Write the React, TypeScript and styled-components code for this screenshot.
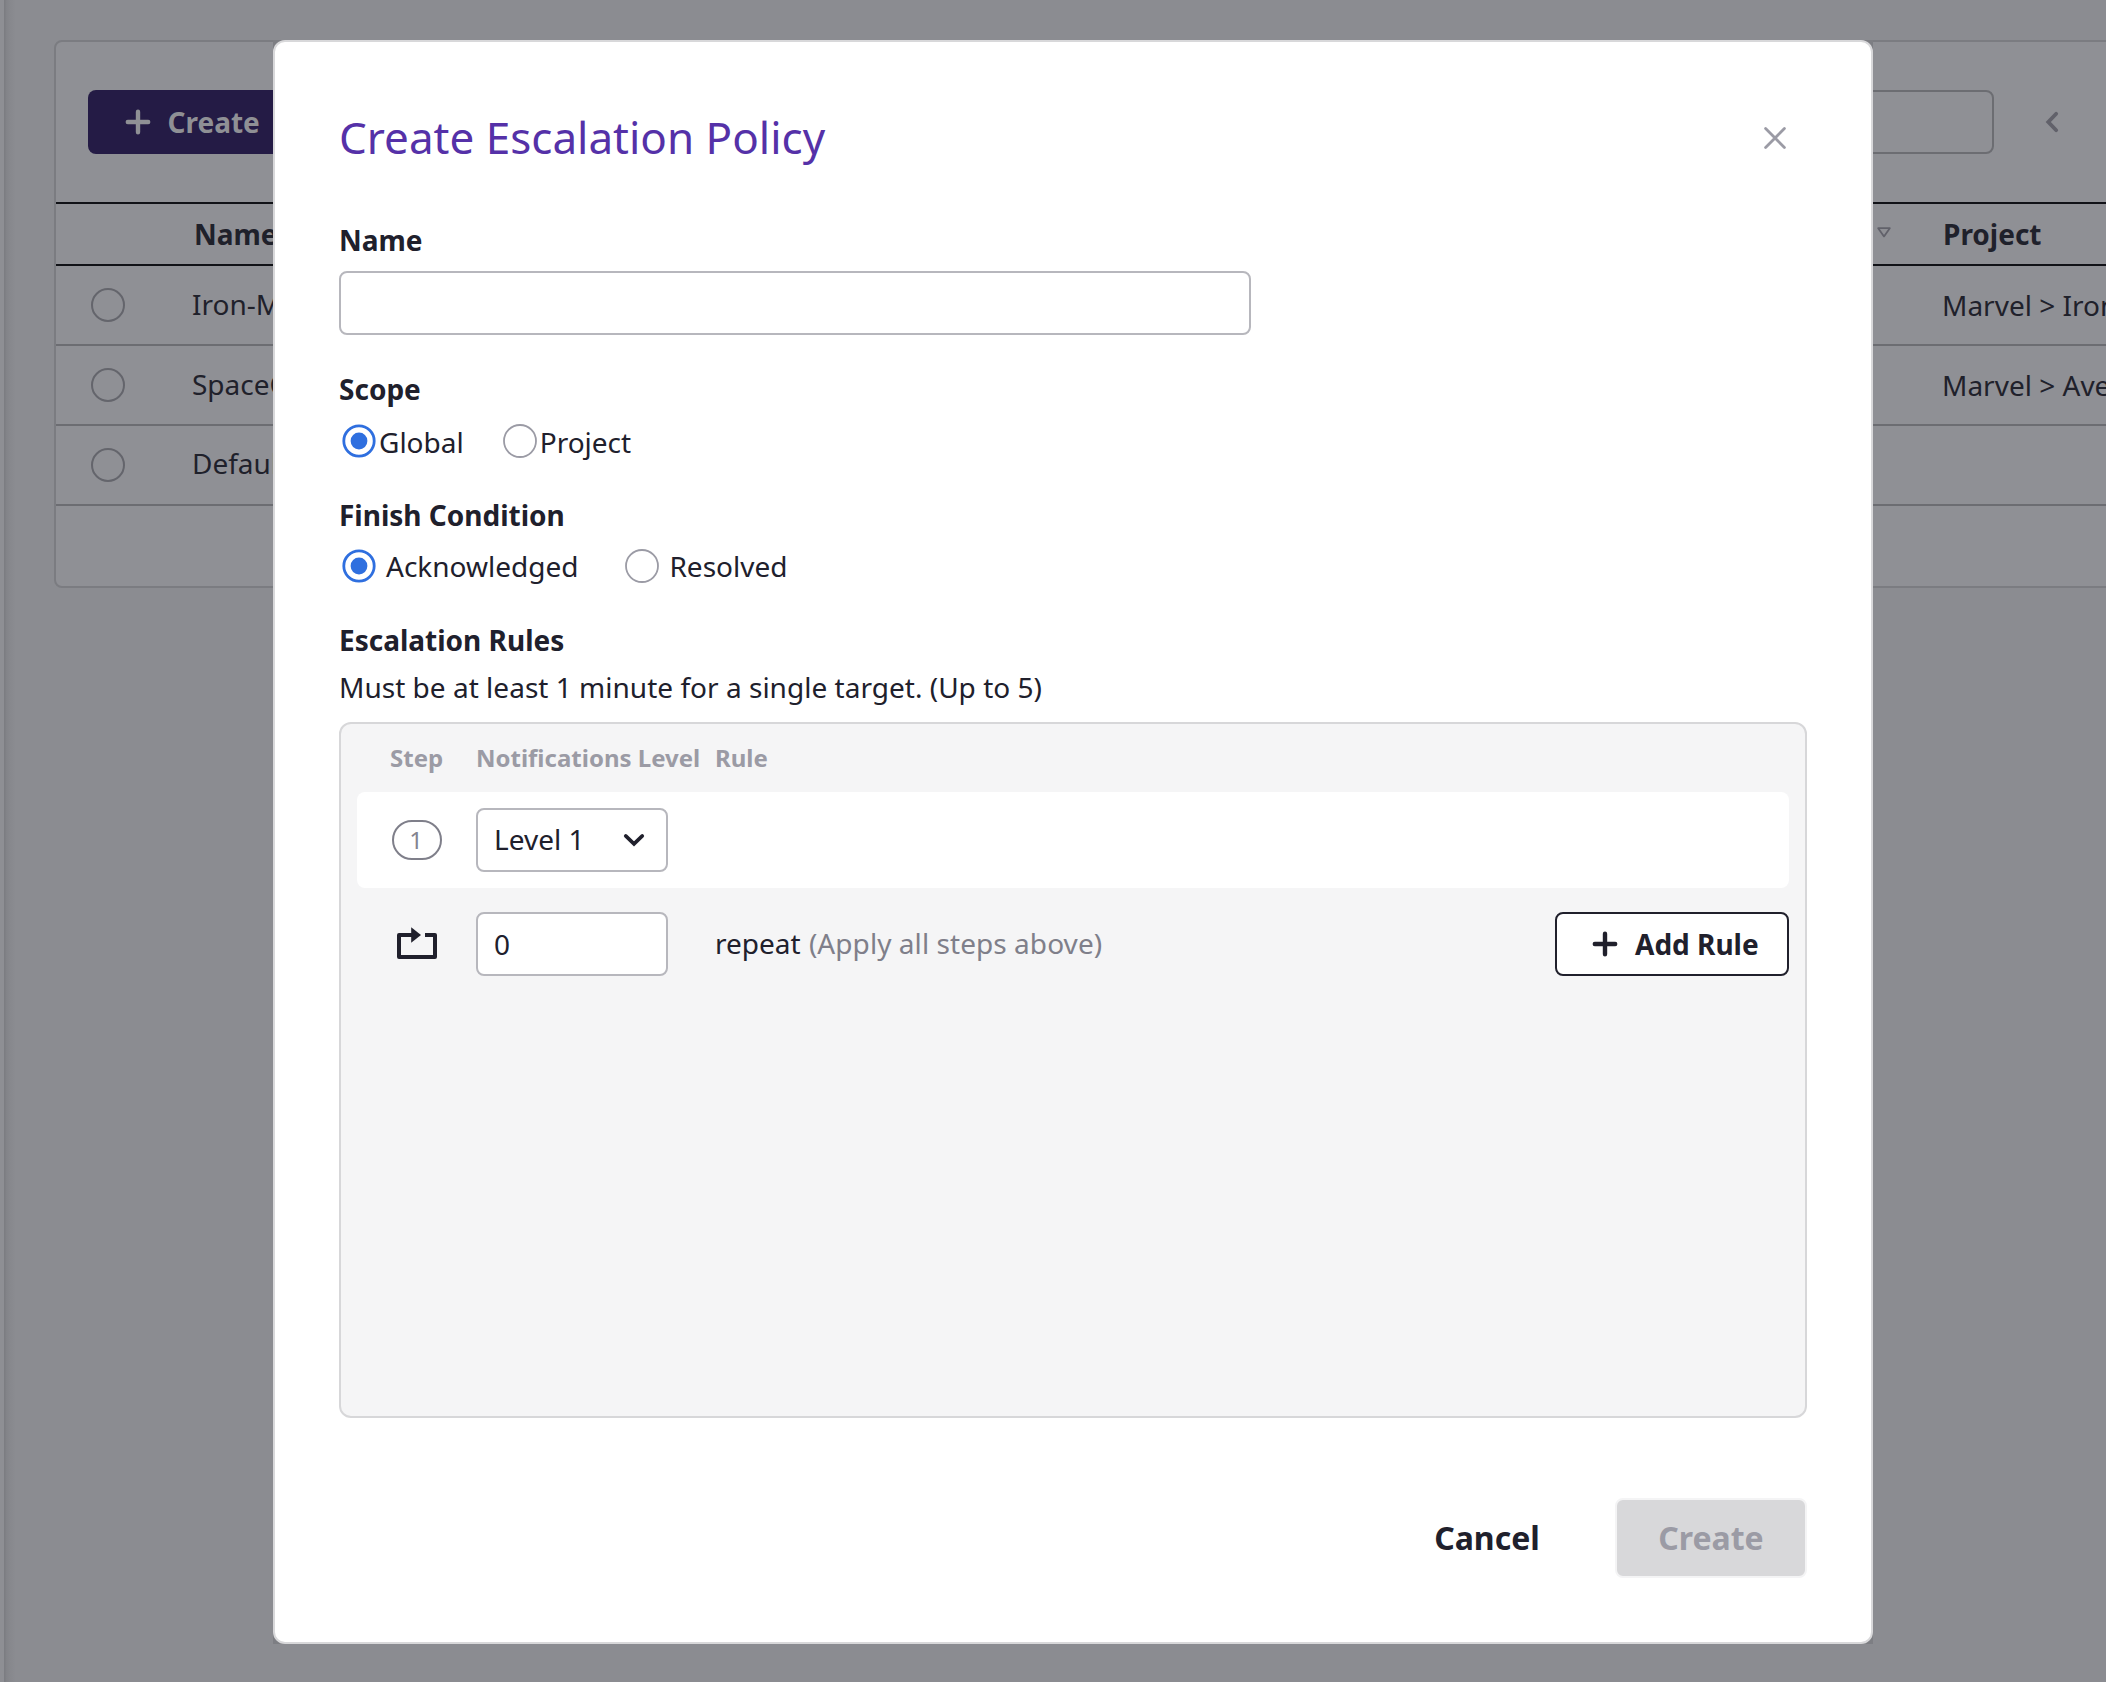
import React from 'react';
import styled, { createGlobalStyle } from 'styled-components';

const GlobalStyle = createGlobalStyle`
  *, *::before, *::after { box-sizing: border-box; }
  body {
    margin: 0;
    overflow: hidden;
    background: #8b8c91;
    font-family: 'Noto Sans', sans-serif;
    font-size: 28px;
    line-height: 40px;
    color: #20202c;
  }
  button, input { font: inherit; color: inherit; margin: 0; }
`;

/* ---------- dimmed page ---------- */

const Page = styled.div`
  position: relative;
  display: flex;
  width: 2106px;
  height: 1682px;
  overflow: hidden;
`;

const SideEdge = styled.div`
  flex: none;
  width: 16px;
  background: linear-gradient(
    to right,
    #8e8f94 0 4px,
    #7c7d82 4px 5px,
    #828388 6px,
    #87888d 10px,
    #8b8c91 16px
  );
`;

const Main = styled.main`
  flex: none;
  width: 2300px;
  padding: 40px 0 0 38px;
`;

const Card = styled.section`
  height: 548px;
  background: #8f9095;
  border: 2px solid #7b7c81;
  border-radius: 8px;
`;

const Toolbar = styled.div`
  display: flex;
  align-items: center;
  height: 160px;
  padding-left: 32px;
`;

const ToolbarCreate = styled.button`
  display: flex;
  align-items: center;
  width: 240px;
  height: 64px;
  padding: 0 0 0 36px;
  gap: 15.5px;
  border: 0;
  border-radius: 8px;
  background: #241b45;
  color: #8f9095;
  font-weight: 700;
`;

const Search = styled.div`
  width: 560px;
  height: 64px;
  margin-left: 1106px;
  border: 2px solid #6c6d72;
  border-radius: 8px;
`;

const Pager = styled.div`
  display: flex;
  margin-left: 50px;
  color: #61616a;
`;

const TableHead = styled.div`
  display: grid;
  grid-template-columns: 138px 1681px 68px 1fr;
  align-items: center;
  height: 64px;
  border-top: 2px solid #111217;
  border-bottom: 2px solid #111217;
  color: #1f212b;
  font-weight: 700;
`;

const Sort = styled.span`
  display: flex;
  color: #61616a;
  padding: 0 0 4px 2px;
`;

const TableRow = styled.div`
  display: grid;
  grid-template-columns: 35px 101px 1750px 1fr;
  align-items: center;
  height: 80px;
  border-bottom: 2px solid #6c6d72;
  color: #1f212b;
`;

const Cell = styled.span<{ $shift?: number }>`
  padding-bottom: ${(p) => p.$shift ?? 0}px;
  white-space: nowrap;
`;

const RowRadio = styled.i`
  width: 34px;
  height: 34px;
  border: 2px solid #64656c;
  border-radius: 50%;
`;

/* ---------- dialog ---------- */

const Overlay = styled.div`
  position: absolute;
  inset: 0;
  padding: 40px 0 0 273px;
`;

const DialogFrame = styled.div`
  width: 1600px;
  background: #7d7e83;
`;

const Dialog = styled.div`
  display: flex;
  flex-direction: column;
  height: 1604px;
  padding: 65px 64px 0;
  background: #fff;
  border: 2px solid #d8d8da;
  border-radius: 12px;
`;

const DialogHeader = styled.header`
  display: flex;
  align-items: center;
  justify-content: space-between;
  height: 60px;
  margin-bottom: 53px;
`;

const Title = styled.h1`
  margin: 0;
  font-size: 44px;
  line-height: 60px;
  font-weight: 400;
  color: #5531a8;
`;

const CloseButton = styled.button`
  display: flex;
  padding: 2px 0 0;
  margin-right: 20px;
  border: 0;
  background: none;
  color: #9b9ba5;
`;

const Label = styled.h2<{ $gap: number }>`
  margin: 0 0 ${(p) => p.$gap}px;
  font-size: 28px;
  line-height: 40px;
  font-weight: 700;
`;

const TextInput = styled.input<{ $width: number }>`
  width: ${(p) => p.$width}px;
  height: 64px;
  padding: 0 16px;
  background: #fff;
  border: 2px solid #b7b7bd;
  border-radius: 8px;
  outline: 0;
`;

const Block = styled.div<{ $gap: number }>`
  display: flex;
  flex-direction: column;
  align-items: flex-start;
  margin-bottom: ${(p) => p.$gap}px;
`;

const RadioGroup = styled.div<{ $gap: number }>`
  display: flex;
  gap: ${(p) => p.$gap}px;
  padding-left: 3px;
`;

const RadioOption = styled.label<{ $gap: number; $lift: number }>`
  display: flex;
  align-items: center;
  gap: ${(p) => p.$gap}px;
  height: 40px;
  svg { margin-bottom: ${(p) => p.$lift}px; }
`;

const Hint = styled.p`
  margin: 0 0 15px;
  letter-spacing: 0.02px;
`;

const RulesBox = styled.div`
  height: 696px;
  padding: 0 16px;
  background: #f5f5f6;
  border: 2px solid #d7d7d9;
  border-radius: 12px;
`;

const RulesHead = styled.div`
  display: grid;
  grid-template-columns: 86px 239px 1fr;
  height: 68px;
  padding: 14px 0 0 33px;
  font-size: 24px;
  line-height: 40px;
  font-weight: 700;
  color: #9b9ba5;
`;

const RuleRow = styled.div<{ $filled?: boolean }>`
  display: grid;
  grid-template-columns: 119px 239px 1fr auto;
  align-items: center;
  height: ${(p) => (p.$filled ? 96 : 64)}px;
  margin-bottom: 24px;
  border-radius: 8px;
  background: ${(p) => (p.$filled ? '#fff' : 'transparent')};
`;

const StepBadge = styled.span`
  width: 50px;
  height: 40px;
  margin-left: 35px;
  padding-right: 2px;
  border: 2px solid #7f7f8a;
  border-radius: 20px;
  font-size: 24px;
  line-height: 36px;
  text-align: center;
  color: #84848f;
`;

const RepeatMark = styled.span`
  display: flex;
  margin-left: 39px;
`;

const LevelSelect = styled.div`
  display: flex;
  align-items: center;
  justify-content: space-between;
  width: 192px;
  height: 64px;
  padding: 0 20px 0 16px;
  background: #fff;
  border: 2px solid #b7b7bd;
  border-radius: 8px;
`;

const SelectValue = styled.span`
  padding-bottom: 2px;
`;

const RepeatText = styled.span`
  padding-bottom: 2px;
`;

const Muted = styled.span`
  margin-left: 1px;
  letter-spacing: 0.06px;
  color: #7f7f8a;
`;

const AddRuleButton = styled.button`
  display: flex;
  align-items: center;
  width: 234px;
  height: 64px;
  padding: 0 0 0 34px;
  gap: 16px;
  background: #fff;
  border: 2px solid #20202c;
  border-radius: 8px;
  font-weight: 700;
`;

const DialogFooter = styled.footer`
  display: flex;
  justify-content: flex-end;
  height: 80px;
  margin-top: 80px;
`;

const FooterButton = styled.button<{ $disabled?: boolean }>`
  width: 192px;
  height: 80px;
  padding: 0;
  margin-left: ${(p) => (p.$disabled ? 32 : 0)}px;
  border: 2px solid ${(p) => (p.$disabled ? '#f4f4f5' : 'transparent')};
  border-radius: 8px;
  background: ${(p) => (p.$disabled ? '#d8d8da' : 'transparent')};
  color: ${(p) => (p.$disabled ? '#9b9ba5' : '#20202c')};
  font-size: 32px;
  line-height: 44px;
  font-weight: 700;
`;

/* ---------- icons ---------- */

const Plus = () => (
  <svg width="28" height="28" viewBox="0 0 28 28" fill="none" stroke="currentColor" strokeWidth="4.4" strokeLinecap="round">
    <path d="M14 3.8V24.2M3.8 14H24.2" />
  </svg>
);

const Close = () => (
  <svg width="24" height="24" viewBox="0 0 24 24" fill="none" stroke="currentColor" strokeWidth="2.8" strokeLinecap="round">
    <path d="M2.6 2.6L21.4 21.4M21.4 2.6L2.6 21.4" />
  </svg>
);

const ChevronDown = () => (
  <svg width="24" height="16" viewBox="0 0 24 16" fill="none" stroke="currentColor" strokeWidth="3.6" strokeLinecap="round">
    <path d="M3.7 3.9L12 11.9L20.3 3.9" />
  </svg>
);

const ChevronLeft = () => (
  <svg width="16" height="24" viewBox="0 0 16 24" fill="none" stroke="currentColor" strokeWidth="3.8" strokeLinecap="round">
    <path d="M12.2 3.8L4.3 12L12.2 20.2" />
  </svg>
);

const SortDown = () => (
  <svg width="14" height="11" viewBox="0 0 14 11" fill="none" stroke="currentColor" strokeWidth="1.8" strokeLinejoin="round">
    <path d="M1.2 1.2H12.8L7 9.4Z" />
  </svg>
);

const Repeat = () => (
  <svg width="42" height="34" viewBox="0 0 42 34">
    <path d="M17 8H3V30H39V8H29" fill="none" stroke="#20202c" strokeWidth="4" strokeLinejoin="round" />
    <path d="M15.2 0.3L25 8L15.2 15.7Z" fill="#20202c" />
  </svg>
);

const RadioMark = ({ checked }: { checked?: boolean }) => (
  <svg width="34" height="34" viewBox="0 0 34 34" fill="none">
    <circle cx="17" cy="17" r={checked ? 15.2 : 16} stroke={checked ? '#2f6fdf' : '#9b9ba5'} strokeWidth={checked ? 2.8 : 1.8} />
    {checked && <circle cx="17" cy="17" r="8.4" fill="#2f6fdf" />}
  </svg>
);

/* ---------- data ---------- */

const policies = [
  { name: 'Iron-Man', project: 'Marvel > Iron', nameShift: 2 },
  { name: 'SpaceONE', project: 'Marvel > Ave', nameShift: 2 },
  { name: 'Default', project: '', nameShift: 4 },
];

export default function App() {
  return (
    <>
      <GlobalStyle />
      <Page>
        <SideEdge />
        <Main>
          <Card>
            <Toolbar>
              <ToolbarCreate>
                <Plus />
                Create
              </ToolbarCreate>
              <Search />
              <Pager>
                <ChevronLeft />
              </Pager>
            </Toolbar>
            <TableHead>
              <Cell />
              <Cell>Name</Cell>
              <Sort>
                <SortDown />
              </Sort>
              <Cell>Project</Cell>
            </TableHead>
            {policies.map((p) => (
              <TableRow key={p.name}>
                <Cell />
                <RowRadio />
                <Cell $shift={p.nameShift}>{p.name}</Cell>
                <Cell>{p.project}</Cell>
              </TableRow>
            ))}
          </Card>
        </Main>

        <Overlay>
          <DialogFrame>
            <Dialog role="dialog">
              <DialogHeader>
                <Title>Create Escalation Policy</Title>
                <CloseButton aria-label="Close">
                  <Close />
                </CloseButton>
              </DialogHeader>

              <Block $gap={34}>
                <Label $gap={11}>Name</Label>
                <TextInput $width={912} />
              </Block>

              <Block $gap={33}>
                <Label $gap={13}>Scope</Label>
                <RadioGroup $gap={39}>
                  <RadioOption $gap={3} $lift={2}>
                    <RadioMark checked />
                    Global
                  </RadioOption>
                  <RadioOption $gap={3} $lift={2}>
                    <RadioMark />
                    Project
                  </RadioOption>
                </RadioGroup>
              </Block>

              <Block $gap={34}>
                <Label $gap={11}>Finish Condition</Label>
                <RadioGroup $gap={47}>
                  <RadioOption $gap={10} $lift={0}>
                    <RadioMark checked />
                    Acknowledged
                  </RadioOption>
                  <RadioOption $gap={10} $lift={0}>
                    <RadioMark />
                    Resolved
                  </RadioOption>
                </RadioGroup>
              </Block>

              <Label $gap={7}>Escalation Rules</Label>
              <Hint>Must be at least 1 minute for a single target. (Up to 5)</Hint>

              <RulesBox>
                <RulesHead>
                  <span>Step</span>
                  <span>Notifications Level</span>
                  <span>Rule</span>
                </RulesHead>
                <RuleRow $filled>
                  <StepBadge>1</StepBadge>
                  <LevelSelect>
                    <SelectValue>Level 1</SelectValue>
                    <ChevronDown />
                  </LevelSelect>
                </RuleRow>
                <RuleRow>
                  <RepeatMark>
                    <Repeat />
                  </RepeatMark>
                  <TextInput $width={192} defaultValue="0" />
                  <RepeatText>
                    repeat <Muted>(Apply all steps above)</Muted>
                  </RepeatText>
                  <AddRuleButton>
                    <Plus />
                    Add Rule
                  </AddRuleButton>
                </RuleRow>
              </RulesBox>

              <DialogFooter>
                <FooterButton>Cancel</FooterButton>
                <FooterButton $disabled>Create</FooterButton>
              </DialogFooter>
            </Dialog>
          </DialogFrame>
        </Overlay>
      </Page>
    </>
  );
}
